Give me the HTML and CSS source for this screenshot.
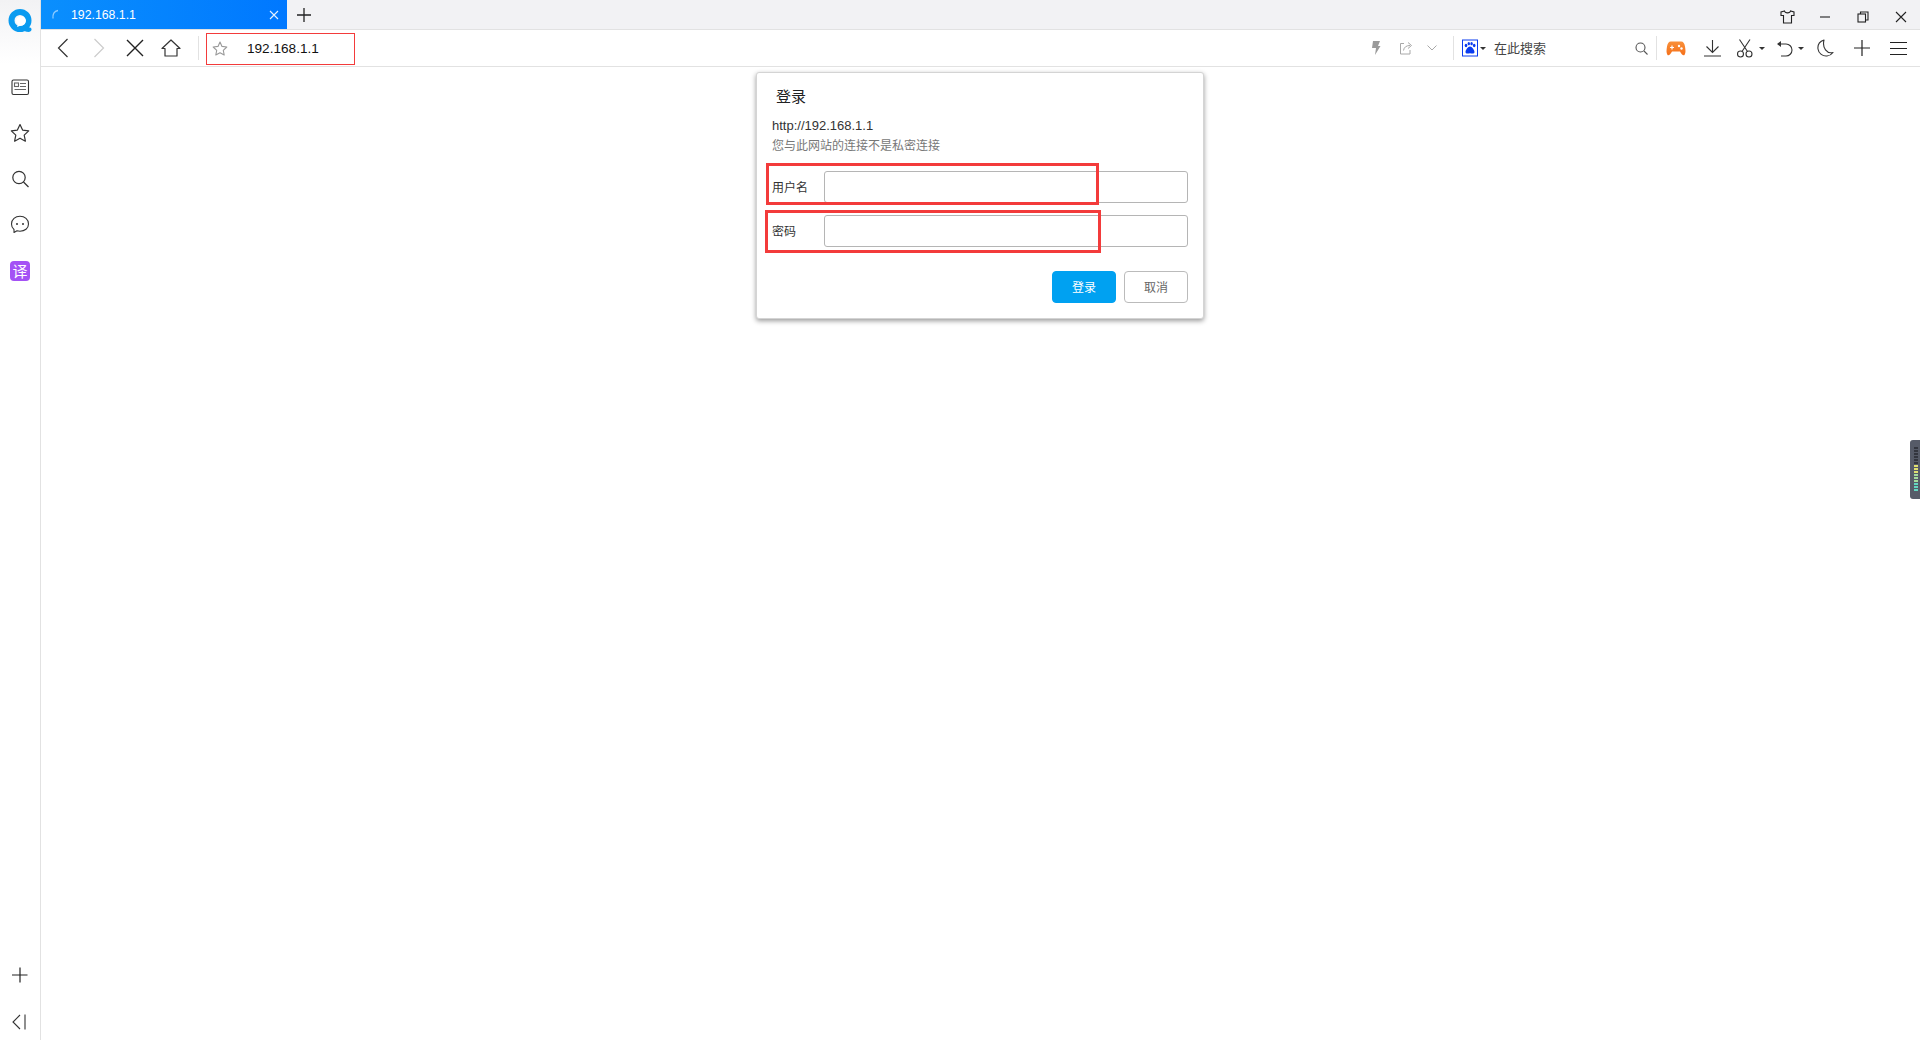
FILE: index.html
```html
<!DOCTYPE html>
<html lang="zh-CN">
<head>
<meta charset="utf-8">
<title>192.168.1.1</title>
<link rel="stylesheet" href="styles.css">
</head>
<body>
<div class="app">
  <aside class="sidebar">
    <div class="logo-cell">
      <svg width="26" height="26" viewBox="0 0 26 26"><circle cx="13" cy="12.500" r="8.500" fill="none" stroke="#0a9bf0" stroke-width="6"/><path d="M15 18l8 1.500q2.500 1 1 3.500l-2 1q-5 0-9-4z" fill="#0a9bf0"/><path d="M9 13a5 4.600 0 1 1 5 4.500l-4 1.500 1-2.800a4 4 0 0 1-2-3.200z" fill="#fff"/></svg>
    </div>
    <div class="side-cell side-first">
      <svg width="20" height="18" viewBox="0 0 20 18" fill="none" stroke="#333" stroke-width="1.100"><rect x="2" y="2" width="16.500" height="14.500" rx="1.500"/><rect x="4.500" y="5" width="4" height="3.500" stroke="#666"/><path d="M10 5.500h6M10 8.500h6M4.500 11.500h11.500" stroke="#666"/></svg>
    </div>
    <div class="side-cell">
      <svg width="20" height="20" viewBox="0 0 20 20" fill="none" stroke="#333" stroke-width="1.200"><path d="M10 1.500l2.600 5.600 6.100.8-4.500 4.200 1.200 6.100L10 15.200l-5.400 3 1.200-6.100L1.300 7.900l6.100-.8z" stroke-linejoin="round"/></svg>
    </div>
    <div class="side-cell">
      <svg width="20" height="20" viewBox="0 0 20 20" fill="none" stroke="#333" stroke-width="1.200"><circle cx="9" cy="8.500" r="6.200"/><path d="M13.500 13l5 5"/></svg>
    </div>
    <div class="side-cell">
      <svg width="20" height="20" viewBox="0 1 20 20" fill="none" stroke="#333" stroke-width="1.100"><path d="M4 15.500C2 14 1.500 12 1.500 10c0-4.500 3.800-7.700 8.500-7.700s8.500 3.200 8.500 7.700-3.800 7.200-8.500 7.200c-1 0-2-.1-3-.4l-3 1.700z" stroke-linejoin="round"/><circle cx="7" cy="10" r="1" fill="#333" stroke="none"/><circle cx="13" cy="10" r="1" fill="#333" stroke="none"/></svg>
    </div>
    <div class="side-cell">
      <span class="translate">译</span>
    </div>
    <div class="side-spacer"></div>
    <div class="side-cell side-plus">
      <svg width="16" height="16" viewBox="0 0 16 16" stroke="#222" stroke-width="1.200"><path d="M0 8h15.500M8 .5v15"/></svg>
    </div>
    <div class="side-cell side-last">
      <svg width="16" height="16" viewBox="0 0 16 16" fill="none" stroke="#333" stroke-width="1.100"><path d="M8 1L1 8l7 7M13 .5v15"/></svg>
    </div>
  </aside>
  <div class="main">
    <header class="tabbar">
      <div class="tab">
        <svg class="spinner" width="10" height="12" viewBox="0 0 10 12" fill="none" stroke="#8ccaff" stroke-width="1.300"><path d="M7 1.500C3 2 1.500 5.500 2 9.500"/></svg>
        <span class="tab-title">192.168.1.1</span>
        <svg class="tab-close" width="10" height="10" viewBox="0 0 10 10" stroke="#e4f1ff" stroke-width="1.100"><path d="M1 1l8 8M9 1l-8 8"/></svg>
      </div>
      <div class="new-tab">
        <svg width="14" height="14" viewBox="0 0 14 14" stroke="#222" stroke-width="1.300"><path d="M0 7h14M7 0v14"/></svg>
      </div>
      <div class="window-controls">
        <span class="win-btn"><svg width="15" height="14" viewBox="0 0 15 14" fill="none" stroke="#222" stroke-width="1.100"><path d="M4.500 1L1 2v3.500h2.500V13h8V5.500H14V2l-3.500-1c-.5 2.500-5.500 2.500-6 0z"/></svg></span>
        <span class="win-btn"><svg width="12" height="12" viewBox="0 0 12 12" stroke="#222" stroke-width="1.100"><path d="M1 6h10"/></svg></span>
        <span class="win-btn"><svg width="12" height="12" viewBox="0 0 12 12" fill="none" stroke="#222" stroke-width="1.100"><rect x="1" y="3" width="7.500" height="8"/><path d="M3.500 3V1h7.500v8H8.500"/></svg></span>
        <span class="win-btn"><svg width="12" height="12" viewBox="0 0 12 12" stroke="#222" stroke-width="1.100"><path d="M1 1l10 10M11 1L1 11"/></svg></span>
      </div>
    </header>
    <nav class="toolbar">
      <span class="nav-btn"><svg width="12" height="20" viewBox="0 0 12 20" fill="none" stroke="#333" stroke-width="1.200"><path d="M10.500 1L1.500 10l9 9"/></svg></span>
      <span class="nav-btn"><svg width="12" height="20" viewBox="0 0 12 20" fill="none" stroke="#ccc" stroke-width="1.200"><path d="M1.500 1l9 9-9 9"/></svg></span>
      <span class="nav-btn"><svg width="18" height="18" viewBox="0 0 18 18" stroke="#222" stroke-width="1.400"><path d="M1 1l16 16M17 1L1 17"/></svg></span>
      <span class="nav-btn"><svg width="20" height="18" viewBox="0 0 20 18" fill="none" stroke="#333" stroke-width="1.200"><path d="M1 9.500L10 1l9 8.500h-3v7.500H4V9.500z" stroke-linejoin="round"/></svg></span>
      <span class="sep sep-nav"></span>
      <div class="address">
        <svg width="16" height="15" viewBox="0 0 16 15" fill="none" stroke="#999" stroke-width="1.100"><path d="M8 1l2 4.400 4.800.6-3.500 3.300.9 4.700L8 11.700 3.800 14l.9-4.700L1.200 6 6 5.400z" stroke-linejoin="round"/></svg>
        <span class="url">192.168.1.1</span>
      </div>
      <div class="tool-spacer"></div>
      <span class="tool t-flash"><svg width="10" height="14" viewBox="0 0 10 14" fill="#9a9a9a"><path d="M2 0h7L7 5h2.500L4 14l1-7H1z"/></svg></span>
      <span class="tool t-share"><svg width="14" height="14" viewBox="0 0 14 14" fill="none" stroke="#a8a8a8"><path d="M5 2.500H1.500v10.500h9.500V9"/><path d="M4.500 9.500C5 6 7.500 4.500 11 4.500M9 1.500l3.500 3-3.500 3"/></svg></span>
      <span class="tool t-chev"><svg width="10" height="6" viewBox="0 0 10 6" fill="none" stroke="#a8a8a8"><path d="M.5.500L5 5 9.500.500"/></svg></span>
      <span class="sep sep-a"></span>
      <span class="baidu"><svg width="16" height="18" viewBox="0 0 16 18"><rect x=".5" y="1" width="15" height="16" fill="#fff" stroke="#0a3cf0"/><g fill="#0a3cf0"><ellipse cx="4" cy="6.500" rx="1.300" ry="1.700"/><ellipse cx="6.800" cy="4.700" rx="1.200" ry="1.600"/><ellipse cx="9.600" cy="4.700" rx="1.200" ry="1.600"/><ellipse cx="12.200" cy="6.500" rx="1.300" ry="1.700"/><path d="M8 7.500c2 0 4.500 3.500 4.500 5.500s-2.500 1.800-4.500 1.200c-2 .6-4.500.8-4.500-1.200S6 7.500 8 7.500z"/></g></svg></span>
      <span class="caret caret-baidu"></span>
      <span class="search-text">在此搜索</span>
      <span class="tool t-search"><svg width="13" height="13" viewBox="0 0 13 13" fill="none" stroke="#555" stroke-width="1.100"><circle cx="5.500" cy="5.500" r="4.500"/><path d="M9 9l3.500 3.500"/></svg></span>
      <span class="sep sep-b"></span>
      <span class="tool t-game"><svg width="20" height="15" viewBox="0 0 20 15"><defs><linearGradient id="game" x1="0" y1="0" x2="0" y2="1"><stop offset="0" stop-color="#f9903a"/><stop offset="1" stop-color="#f5701a"/></linearGradient></defs><path d="M5 .5h10c2.500 0 3.500 2 4 5 .5 3.500 1 6-.5 8.500-1.500 1-3-1-4.500-3.500H6C4.500 13 3 15 1.500 14 0 11.500.500 9 1 5.500c.5-3 1.500-5 4-5z" fill="url(#game)"/><path d="M4 6.500h4M6 4.500v4" stroke="#fff" stroke-width="1.200"/><circle cx="13" cy="5" r="1.200" fill="#fff"/><circle cx="15.500" cy="7.500" r="1.200" fill="#fff"/></svg></span>
      <span class="tool t-down"><svg width="17" height="17" viewBox="0 0 17 17" fill="none" stroke="#333" stroke-width="1.100"><path d="M8.500 0v12M2.500 6.500l6 6 6-6M0 16h17"/></svg></span>
      <span class="tool t-cut"><svg width="16" height="19" viewBox="0 0 16 19" fill="none" stroke="#333" stroke-width="1.100"><circle cx="3.500" cy="15" r="3"/><circle cx="12" cy="15" r="3"/><path d="M5 12.500L13 .5M10.500 12.500L2.500.5"/></svg></span>
      <span class="caret caret-cut"></span>
      <span class="tool t-undo"><svg width="17" height="18" viewBox="0 0 17 18" fill="none" stroke="#333" stroke-width="1.100"><path d="M5 17h5a5.500 5.500 0 0 0 0-12H2"/><path d="M5 2L1 5l4 3z" fill="#333" stroke="none"/></svg></span>
      <span class="caret caret-undo"></span>
      <span class="tool t-moon"><svg width="17" height="18" viewBox="0 0 17 18" fill="none" stroke="#333" stroke-width="1.100"><path d="M7 1C2.500 2.500.5 6 1 10c.5 4.500 5 7.500 9 7 2.500-.3 4.500-1.500 6-3.500C10 15 5 9 7 1z" stroke-linejoin="round"/></svg></span>
      <span class="tool t-plus"><svg width="16" height="16" viewBox="0 0 16 16" stroke="#222" stroke-width="1.200"><path d="M0 8h16M8 0v16"/></svg></span>
      <span class="tool t-menu"><svg width="17" height="15" viewBox="0 0 17 15" stroke="#222" stroke-width="1.200"><path d="M0 1.500h17M0 7.500h17M0 13.500h17"/></svg></span>
    </nav>
    <main class="page">
      <form class="dialog">
        <div class="dialog-title">登录</div>
        <div class="dialog-url">http://192.168.1.1</div>
        <div class="dialog-note">您与此网站的连接不是私密连接</div>
        <label class="field field-user"><span class="field-label">用户名</span><input class="field-input" type="text"></label>
        <label class="field field-pass"><span class="field-label">密码</span><input class="field-input" type="password"></label>
        <div class="actions">
          <button class="btn btn-primary" type="button">登录</button>
          <button class="btn" type="button">取消</button>
        </div>
        <div class="mark mark-user"></div>
        <div class="mark mark-pass"></div>
      </form>
      <div class="handle">
        <i class="b d"></i><i class="b d"></i><i class="b d"></i><i class="b d"></i><i class="b d"></i><i class="b d"></i>
        <i class="b y"></i><i class="b y"></i><i class="b y"></i><i class="b g"></i><i class="b g"></i><i class="b g"></i><i class="b t"></i><i class="b t"></i><i class="b t"></i>
      </div>
    </main>
  </div>
</div>
</body>
</html>
```
FILE: styles.css
```css
* { box-sizing: border-box; }
html, body { margin: 0; height: 100%; overflow: hidden; background: #fff; }
body { font-family: "Liberation Sans", "Noto Sans CJK SC", sans-serif; font-size: 12px; color: #222; }
svg { display: block; flex: none; }

.app { display: flex; height: 1040px; }

/* sidebar */
.sidebar { width: 41px; flex: none; display: flex; flex-direction: column; border-right: 1px solid #e2e2e2; background: linear-gradient(#f2f2f4 0, #fff 64px); }
.logo-cell { height: 40px; display: flex; align-items: center; justify-content: center; padding-top: 1px; }
.side-cell { height: 46px; display: flex; align-items: center; justify-content: center; flex: none; }
.side-first { margin-top: 24px; }
.side-spacer { flex: 1; }
.side-plus { margin-bottom: 1px; }
.side-last { margin-bottom: -5px; }
.translate { width: 20px; height: 20px; border-radius: 4px; background: #a452f5; color: #fff; font-size: 15px; line-height: 20px; text-align: center; font-family: "Noto Sans CJK SC", sans-serif; }

.main { flex: 1; min-width: 0; display: flex; flex-direction: column; }

/* tab strip */
.tabbar { height: 30px; flex: none; display: flex; background: #f2f2f4; border-bottom: 1px solid #e2e2e2; }
.tab { width: 246px; height: 29px; display: flex; align-items: center; color: #fff; background: linear-gradient(90deg, #0a8ffd, #0078ff); padding-left: 10px; }
.tab-title { margin-left: 10px; flex: 1; font-size: 12.300px; }
.tab-close { margin-right: 8px; }
.new-tab { width: 34px; display: flex; align-items: center; justify-content: center; }
.window-controls { margin-left: auto; display: flex; }
.win-btn { width: 38px; height: 29px; display: flex; align-items: center; justify-content: center; padding-top: 4px; }

/* toolbar */
.toolbar { height: 37px; flex: none; display: flex; align-items: center; border-bottom: 1px solid #e2e2e2; padding: 0 13px 0 4px; background: #fff; }
.nav-btn { width: 36px; height: 36px; display: flex; align-items: center; justify-content: center; flex: none; }
.sep { width: 1px; height: 24px; background: #e2e2e2; flex: none; }
.sep-nav { margin-left: 9px; }
.address { margin-left: 7px; width: 149px; height: 32px; margin-top: 1px; border: 1px solid #f33b3b; display: flex; align-items: center; padding-left: 5px; }
.url { margin-left: 19px; font-size: 13.600px; color: #111; }
.tool-spacer { flex: 1; }
.tool { display: flex; align-items: center; justify-content: center; flex: none; }
.t-flash { width: 20px; }
.t-share { width: 20px; margin-left: 10px; }
.t-chev { width: 14px; margin-left: 9px; }
.sep-a { margin-left: 14px; }
.baidu { margin-left: 8px; }
.caret { width: 0; height: 0; border-left: 3px solid transparent; border-right: 3px solid transparent; border-top: 3px solid #333; flex: none; }
.caret-baidu { margin-left: 2px; }
.search-text { margin-left: 8px; width: 52px; font-size: 13px; color: #444; flex: none; padding-bottom: 2px; }
.t-search { width: 13px; margin-left: 89px; }
.sep-b { margin-left: 8px; }
.t-game { width: 20px; margin-left: 9px; }
.t-down { width: 17px; margin-left: 18px; }
.t-cut { width: 16px; margin-left: 16px; }
.caret-cut { margin-left: 6px; }
.t-undo { width: 17px; margin-left: 11px; }
.caret-undo { margin-left: 5px; }
.t-moon { width: 17px; margin-left: 13px; }
.t-plus { width: 16px; margin-left: 20px; }
.t-menu { width: 17px; margin-left: 20px; }

/* page */
.page { flex: 1; position: relative; background: #fff; padding-right: 1px; }
.dialog { position: relative; width: 448px; height: 247px; margin: 5px auto 0; background: #fff; border: 1px solid #d4d4d4; border-radius: 3px; box-shadow: 0 2px 5px rgba(0,0,0,.4); padding: 13px 15px 0; }
.dialog-title { font-size: 15px; line-height: 22px; padding-left: 4px; color: #222; }
.dialog-url { margin-top: 10px; line-height: 16px; font-size: 13px; color: #333; }
.dialog-note { margin-top: 4px; line-height: 16px; color: #777; }
.field { display: flex; align-items: center; height: 32px; }
.field-user { margin-top: 17px; }
.field-pass { margin-top: 12px; }
.field-label { width: 52px; flex: none; color: #333; padding-bottom: 2px; }
.field-input { width: 364px; height: 32px; border: 1px solid #b5b5b5; border-radius: 3px; background: #fff; padding: 0 8px; outline: none; }
.actions { margin-top: 24px; display: flex; justify-content: flex-end; gap: 8px; }
.btn { width: 64px; height: 32px; border: 1px solid #bbb; border-radius: 4px; background: #fff; color: #666; font: inherit; padding: 0 0 2px; }
.btn-primary { background: #00a1f1; border-color: #00a1f1; color: #fff; }
.mark { position: absolute; border: 3px solid #f33b3b; }
.mark-user { left: 9px; top: 90px; width: 333px; height: 42px; }
.mark-pass { left: 8px; top: 137px; width: 336px; height: 43px; }

.handle { position: absolute; right: 0; top: 373px; width: 10px; height: 59px; background: #565b68; border-radius: 3px 0 0 3px; padding: 7px 2px 0 4px; display: flex; flex-direction: column; gap: 1px; }
.b { display: block; height: 2px; flex: none; }
.d { background: #33363f; }
.y { background: #e0e070; }
.g { background: #a4dc9c; }
.t { background: #62d6c0; }
```
